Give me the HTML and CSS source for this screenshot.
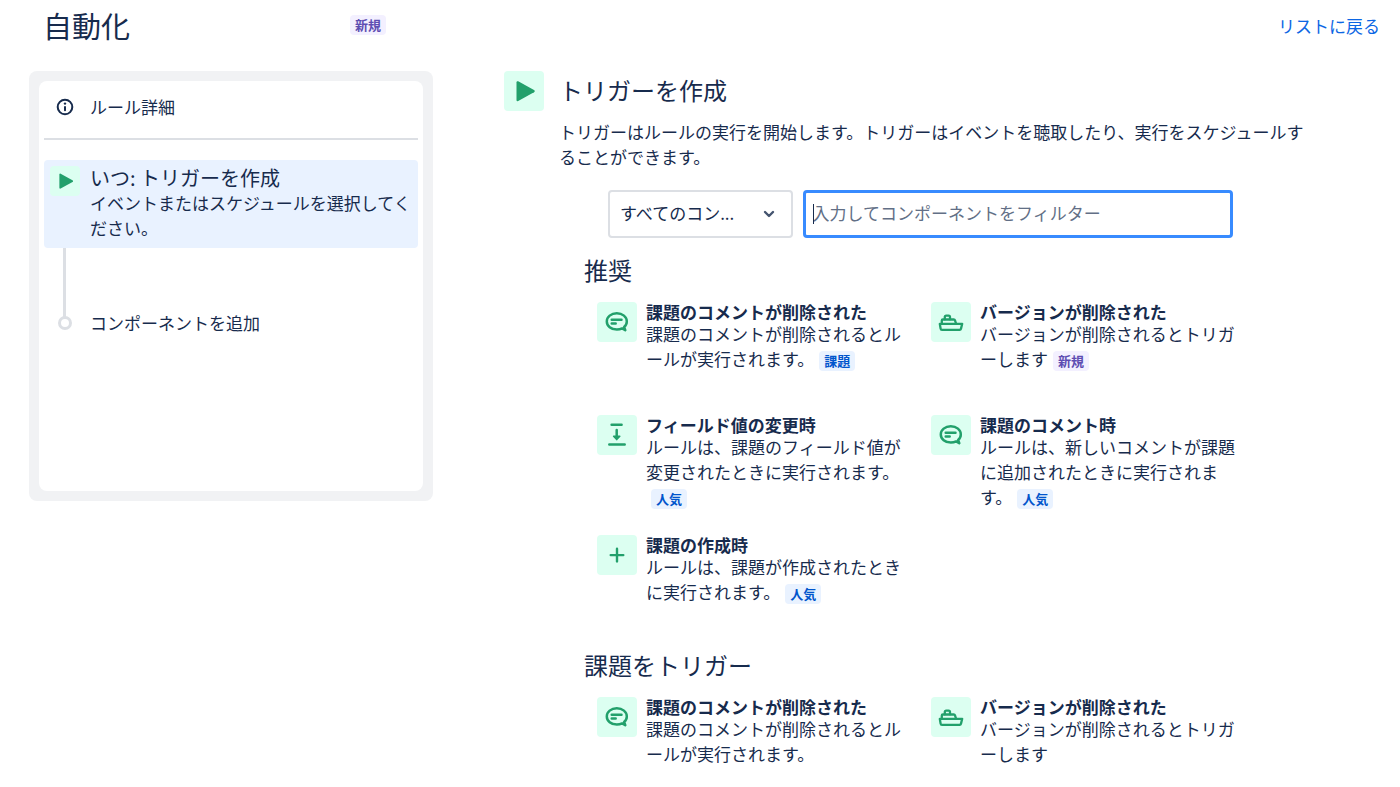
FILE: index.html
```html
<!DOCTYPE html>
<html lang="ja">
<head>
<meta charset="utf-8">
<meta name="viewport" content="width=device-width, initial-scale=1">
<title>自動化</title>
<link rel="stylesheet" href="styles.css">
</head>
<body>
<svg class="sprite" aria-hidden="true">
  <symbol id="icon-play" viewBox="0 0 40 40"><path d="M12.5 11.400v17.600c0 1 .9 1.500 1.700 1.100l15.800-8.800c1-.6 1-1.800 0-2.400l-15.800-8.600c-.8-.4-1.700.1-1.700 1.100z" fill="currentColor"/></symbol>
  <symbol id="icon-comment" viewBox="0 0 40 40"><g fill="none" stroke="currentColor" stroke-width="2.500" stroke-linecap="round" stroke-linejoin="round"><path d="M28.300 28.300l-3.200-1.900c-1.500.8-3.300 1.200-5.300 1.200-5.700 0-10-3.700-10-8.200s4.300-8.200 10-8.200 10 3.700 10 8.200c0 2.200-1 4.200-2.700 5.600z"/><path d="M14.700 17.800h9.800M14.700 21.600h4"/></g></symbol>
  <symbol id="icon-ship" viewBox="0 0 40 40"><g fill="none" stroke="currentColor" stroke-width="2.300" stroke-linecap="round" stroke-linejoin="round"><path d="M8.800 21.800h22.400l-1.200 4.800c-.2.800-.7 1.200-1.400 1.200H11c-.9 0-1.300-.4-1.400-1.200z"/><path d="M10.800 21.500v-2.900c0-.7.400-1.100 1.100-1.100h10.800c.7 0 1.100.3 1.300.9l1 3.100"/><path d="M13.800 17.300v-2.300c0-1 .4-1.400 1.400-1.400h2.400c1 0 1.400.4 1.400 1.400v2.300"/></g></symbol>
  <symbol id="icon-field" viewBox="0 0 40 40"><g fill="none" stroke="currentColor" stroke-width="2.500" stroke-linecap="round" stroke-linejoin="round"><path d="M14.600 9.800h10M12.300 29.500h15.400M19.700 15v8"/><path d="M16.600 21.200l3.100 3.400 3.100-3.400z" fill="currentColor" stroke-width="1.500"/></g></symbol>
  <symbol id="icon-plus" viewBox="0 0 40 40"><path d="M20 13.800v12.600M13.700 20.100h12.600" fill="none" stroke="currentColor" stroke-width="2.400" stroke-linecap="round"/></symbol>
</svg>

<header class="page-header">
  <div class="page-title">
    <h1>自動化</h1>
    <span class="badge badge-new">新規</span>
  </div>
  <a class="back-link" href="#">リストに戻る</a>
</header>

<div class="layout">
  <aside class="rule-panel">
    <div class="rule-card">
      <div class="rule-details">
        <svg class="info-icon" viewBox="0 0 18 18" aria-hidden="true"><circle cx="9" cy="9" r="7.300" fill="none" stroke="currentColor" stroke-width="2"/><circle cx="9" cy="5.600" r="1.200" fill="currentColor"/><path d="M9 9v3.300" stroke="currentColor" stroke-width="2" stroke-linecap="round"/></svg>
        <span>ルール詳細</span>
      </div>
      <div class="rule-step">
        <svg class="tile tile-small" aria-hidden="true"><use href="#icon-play"/></svg>
        <div>
          <h2>いつ: トリガーを作成</h2>
          <p>イベントまたはスケジュールを選択してください。</p>
        </div>
      </div>
      <div class="connector"></div>
      <div class="rule-add">
        <span class="node"></span>
        <span>コンポーネントを追加</span>
      </div>
    </div>
  </aside>

  <main class="editor">
    <svg class="tile" aria-hidden="true"><use href="#icon-play"/></svg>
    <div class="editor-body">
      <h2>トリガーを作成</h2>
      <p class="intro">トリガーはルールの実行を開始します。トリガーはイベントを聴取したり、実行をスケジュールすることができます。</p>

      <form class="filters">
        <div class="select-wrap">
          <select aria-label="コンポーネントの種類"><option>すべてのコン...</option></select>
          <svg viewBox="0 0 12 8" aria-hidden="true"><path d="M2 2l4 4 4-4" fill="none" stroke="currentColor" stroke-width="2.400" stroke-linecap="round" stroke-linejoin="round"/></svg>
        </div>
        <div class="search-wrap">
          <input type="text" aria-label="コンポーネントをフィルター" placeholder="入力してコンポーネントをフィルター">
        </div>
      </form>

      <section class="group">
        <h3>推奨</h3>
        <div class="triggers">
          <article class="trigger">
            <svg class="tile" aria-hidden="true"><use href="#icon-comment"/></svg>
            <div><h4>課題のコメントが削除された</h4><p>課題のコメントが削除されるとルールが実行されます。<span class="badge badge-info">課題</span></p></div>
          </article>
          <article class="trigger">
            <svg class="tile" aria-hidden="true"><use href="#icon-ship"/></svg>
            <div><h4>バージョンが削除された</h4><p>バージョンが削除されるとトリガーします<span class="badge badge-new">新規</span></p></div>
          </article>
          <article class="trigger">
            <svg class="tile" aria-hidden="true"><use href="#icon-field"/></svg>
            <div><h4>フィールド値の変更時</h4><p>ルールは、課題のフィールド値が変更されたときに実行されます。<span class="badge badge-info">人気</span></p></div>
          </article>
          <article class="trigger">
            <svg class="tile" aria-hidden="true"><use href="#icon-comment"/></svg>
            <div><h4>課題のコメント時</h4><p>ルールは、新しいコメントが課題に追加されたときに実行されます。<span class="badge badge-info">人気</span></p></div>
          </article>
          <article class="trigger">
            <svg class="tile" aria-hidden="true"><use href="#icon-plus"/></svg>
            <div><h4>課題の作成時</h4><p>ルールは、課題が作成されたときに実行されます。<span class="badge badge-info">人気</span></p></div>
          </article>
        </div>
      </section>

      <section class="group">
        <h3>課題をトリガー</h3>
        <div class="triggers">
          <article class="trigger">
            <svg class="tile" aria-hidden="true"><use href="#icon-comment"/></svg>
            <div><h4>課題のコメントが削除された</h4><p>課題のコメントが削除されるとルールが実行されます。</p></div>
          </article>
          <article class="trigger">
            <svg class="tile" aria-hidden="true"><use href="#icon-ship"/></svg>
            <div><h4>バージョンが削除された</h4><p>バージョンが削除されるとトリガーします</p></div>
          </article>
        </div>
      </section>
    </div>
  </main>
</div>
</body>
</html>
```

FILE: styles.css
```css
* {
  box-sizing: border-box;
}

body {
  margin: 0;
  padding: 0 20px 0 29px;
  background: #fff;
  color: #172b4d;
  font: 17px/25px "Noto Sans CJK JP", sans-serif;
  text-spacing-trim: space-all;
  line-break: normal;
}

h1, h2, h3, h4, p {
  margin: 0;
  font-weight: 400;
}

.sprite {
  display: none;
}

.page-header {
  display: flex;
  justify-content: space-between;
  align-items: center;
  padding: 0 0 3px 14px;
  height: 53px;
  margin-bottom: 18px;
}

.page-title {
  display: flex;
  flex: 0 1 343px;
  justify-content: space-between;
  align-items: center;
}

.page-title h1 {
  font-size: 29px;
  line-height: 40px;
}

.back-link {
  color: #0c66e4;
  text-decoration: none;
}

.badge {
  display: inline-block;
  padding: 0 5px;
  border-radius: 4px;
  font-size: 13px;
  line-height: 20px;
  font-weight: 700;
}

.badge-new {
  background: #f3f0ff;
  color: #5e4db2;
}

.badge-info {
  background: #e9f2ff;
  color: #0055cc;
}

.layout {
  display: flex;
  align-items: flex-start;
  gap: 71px;
}

.rule-panel {
  flex: 0 1 404px;
  padding: 10px;
  border-radius: 8px;
  background: #f1f2f4;
}

.rule-card {
  min-height: 410px;
  padding: 0 5px;
  border-radius: 8px;
  background: #fff;
}

.rule-details {
  display: flex;
  align-items: center;
  gap: 16px;
  padding: 13px 12px 19px;
  border-bottom: 2px solid #dcdfe4;
}

.info-icon {
  width: 18px;
  height: 18px;
}

.rule-step {
  display: flex;
  gap: 10px;
  margin-top: 20px;
  padding: 6px 6px 8px;
  border-radius: 4px;
  background: #e9f2ff;
}

.rule-step h2 {
  font-size: 20px;
  line-height: 24px;
}

.connector {
  width: 3px;
  height: 69px;
  margin-left: 19px;
  background: #dcdfe4;
}

.rule-add {
  display: flex;
  align-items: center;
  gap: 18px;
  margin-top: -7px;
  padding-left: 14px;
}

.node {
  width: 14px;
  height: 14px;
  border: 3px solid #dcdfe4;
  border-radius: 50%;
}

.tile {
  flex: none;
  width: 40px;
  height: 40px;
  border-radius: 4px;
  background: #dcfff1;
  color: #22a06b;
}

.tile-small {
  width: 30px;
  height: 30px;
}

.editor {
  display: flex;
  flex: 1;
  gap: 15px;
  padding-right: 60px;
}

.editor-body {
  flex: 1;
  min-width: 0;
}

.editor-body > h2 {
  font-size: 24px;
  line-height: 38px;
}

.intro {
  margin-top: 10px;
}

.filters {
  display: grid;
  grid-template-columns: 3fr 7fr;
  gap: 10px;
  margin: 21px 87px 0 49px;
}

.select-wrap {
  display: grid;
  align-items: center;
}

.select-wrap > * {
  grid-area: 1 / 1;
}

.select-wrap svg {
  justify-self: end;
  width: 12px;
  height: 8px;
  margin-right: 18px;
  color: #44546f;
  pointer-events: none;
}

.search-wrap {
  position: relative;
}

/* text cursor of the active filter field */
.search-wrap::after {
  content: "";
  position: absolute;
  top: 14px;
  left: 10px;
  width: 1px;
  height: 20px;
  background: #172b4d;
}

select, input {
  width: 100%;
  height: 48px;
  border-radius: 4px;
  background: #fff;
  color: inherit;
  font: inherit;
  outline: none;
}

select {
  appearance: none;
  padding: 0 40px 3px 10px;
  border: 2px solid #dcdfe4;
}

input {
  padding: 0 7px 3px;
  border: 3px solid #388bff;
}

input::placeholder {
  color: #626f86;
  opacity: 1;
}

.group {
  margin: 15px 80px 0 25px;
}

.group + .group {
  margin-top: 26px;
}

.group h3 {
  font-size: 24px;
  line-height: 34px;
}

.triggers {
  display: grid;
  grid-template-columns: 1fr 1fr;
  gap: 26px 25px;
  margin: 15px 0 0 13px;
}

.trigger {
  display: flex;
  gap: 9px;
  min-height: 87px;
}

.trigger h4 {
  font-weight: 700;
  line-height: 19px;
}

.trigger .badge {
  margin-left: 5px;
}
```
